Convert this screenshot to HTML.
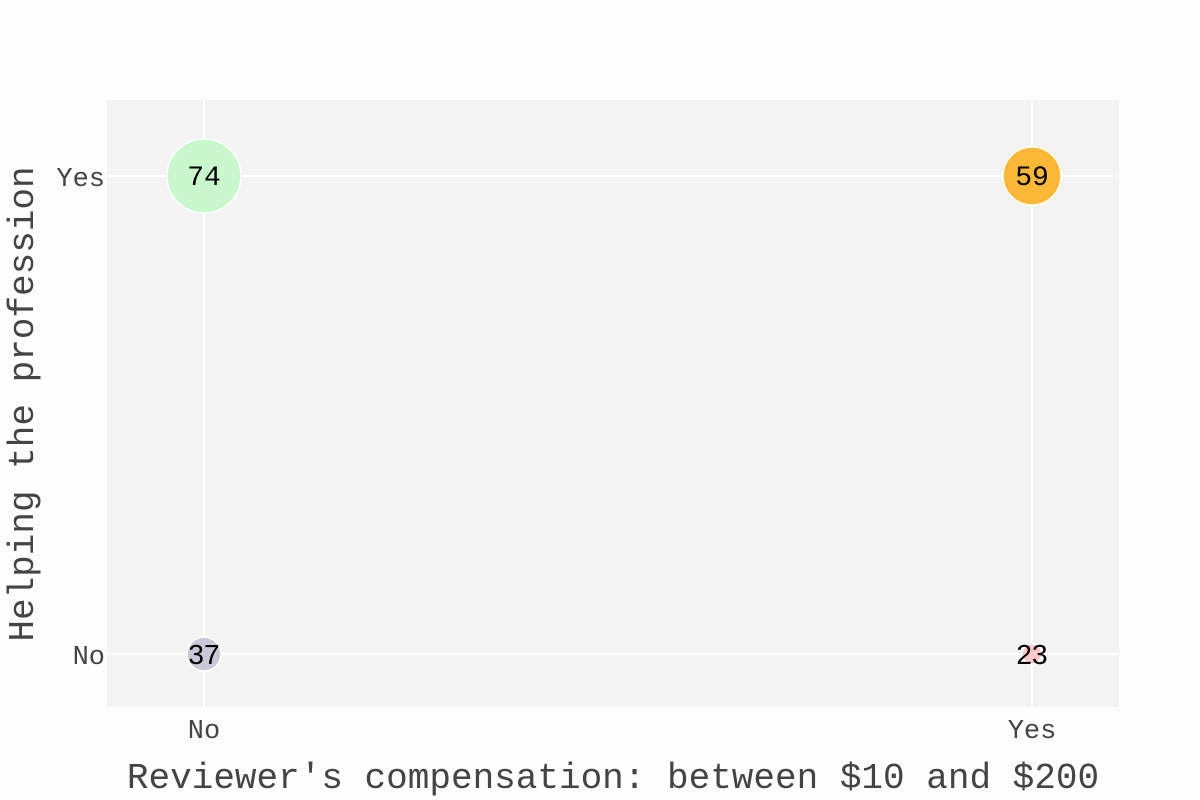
<!DOCTYPE html><html><head><style>body{margin:0;background:#fdfdfd}</style></head><body>
<svg width="1200" height="800" xmlns="http://www.w3.org/2000/svg" style="display:block">
<rect width="1200" height="800" fill="#fdfdfd"/>
<rect x="107" y="100" width="1012" height="607" fill="#f3f3f3"/>
<g stroke="#fff" stroke-width="2">
<line x1="204" y1="100" x2="204" y2="707"/><line x1="1032" y1="100" x2="1032" y2="707"/>
<line x1="107" y1="176" x2="1119" y2="176"/><line x1="107" y1="654" x2="1119" y2="654"/>
</g>
<circle cx="204" cy="176" r="37" fill="#c8f8cc" stroke="#fff" stroke-width="1.5"/>
<circle cx="1032" cy="176" r="29" fill="#fbb837" stroke="#fff" stroke-width="1.5"/>
<circle cx="204" cy="654" r="17" fill="#c8c8d8" stroke="#fff" stroke-width="1.5"/>
<circle cx="1032" cy="654" r="10" fill="#ffc8c8" stroke="#fff" stroke-width="1.5"/>
<g font-family="Liberation Mono, monospace" font-size="28" text-anchor="middle" fill="#000">
<text x="204" y="185">74</text><text x="1032" y="185">59</text></g>
<g font-family="Liberation Sans, sans-serif" font-size="28" text-anchor="middle" fill="#000">
<text x="204" y="664">37</text><text x="1032" y="664">23</text></g>
<g font-family="Liberation Mono, monospace" font-size="27" fill="#444">
<text x="105" y="186" text-anchor="end">Yes</text>
<text x="105" y="664" text-anchor="end">No</text>
<text x="204" y="738" text-anchor="middle">No</text>
<text x="1032" y="738" text-anchor="middle">Yes</text>
<text x="613" y="788" text-anchor="middle" font-size="36">Reviewer's compensation: between $10 and $200</text>
<text transform="translate(33,404) rotate(-90)" text-anchor="middle" font-size="36">Helping the profession</text>
</g>
</svg></body></html>
